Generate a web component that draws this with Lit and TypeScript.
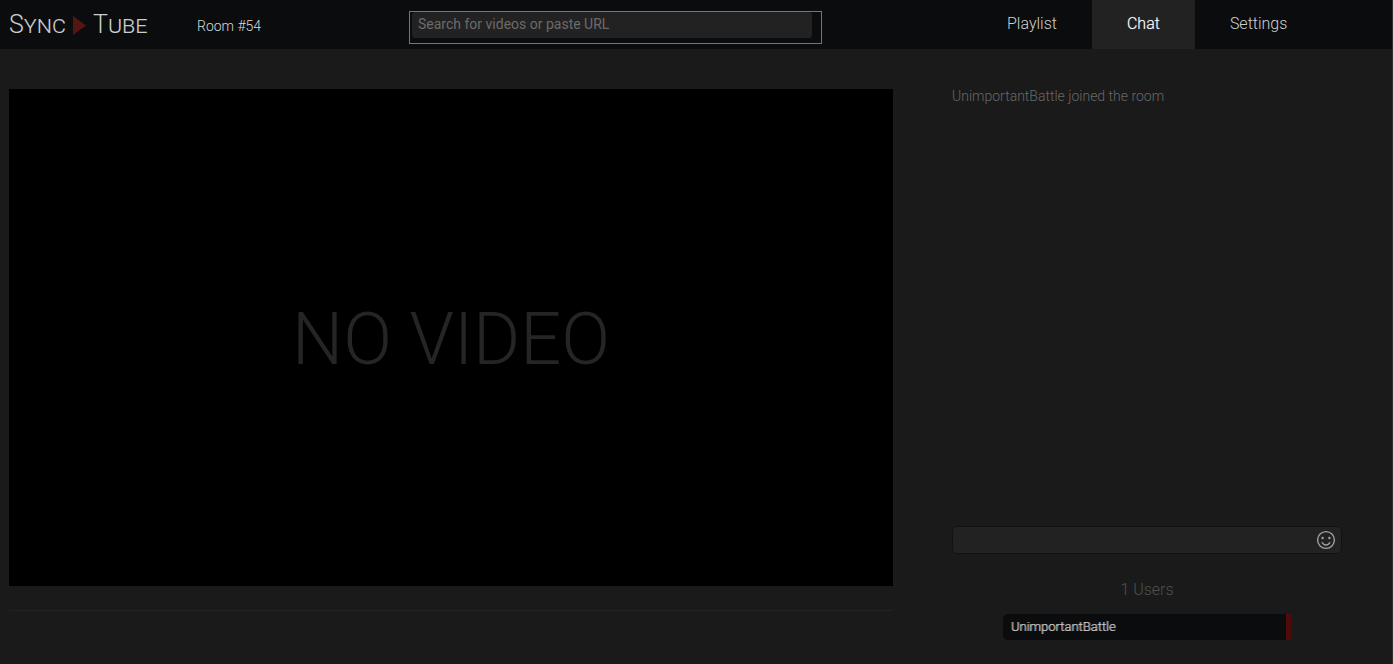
import { LitElement, html, css } from "lit";
import { customElement, state } from "lit/decorators.js";

const TABS = ["Playlist", "Chat", "Settings"];

@customElement("app-root")
export class AppRoot extends LitElement {
  @state() private tab = "Chat";

  static styles = css`
    :host {
      display: flex;
      flex-direction: column;
      box-sizing: border-box;
      min-height: 100vh;
      background: #1a1a1a;
      border-right: 1px solid #303030;
      color: #bbb;
      font-family: Roboto, "Liberation Sans", sans-serif;
      font-weight: 300;
      font-size: 14px;
    }
    * { box-sizing: border-box; }
    header {
      display: grid;
      grid-template-columns: 188fr 212fr 413fr 150fr 420fr;
      height: 49px;
      padding-left: 9px;
      background: #0b0c0e;
      line-height: 20px;
    }
    .logo {
      display: flex;
      align-items: center;
      gap: 7px;
      height: 50px;
      color: #ccc;
      font-size: 25px;
      font-variant: small-caps;
      text-decoration: none;
      line-height: 32px;
    }
    .logo svg { width: 13px; height: 19px; }
    .room { padding-top: 16px; color: #d8d8d8; font-size: 14px; }
    .search {
      height: 33px;
      margin-top: 11px;
      padding: 0 9px 0 2px;
      border: 1px solid #ff3b3b;
    }
    input {
      display: block;
      width: 100%;
      border: 0;
      outline: 0;
      border-radius: 3px;
      background: #222;
      color: #bbb;
      font: inherit;
    }
    .search input { height: 26px; padding: 0 6px 2px; font-weight: 400; }
    .search input::placeholder { color: #6b6b6b; opacity: 1; }
    nav { grid-column: 5; display: flex; }
    .tab {
      height: 49px;
      padding: 0 35px 2px;
      border: 0;
      background: none;
      color: #d0d0d0;
      font: inherit;
      font-size: 16px;
    }
    .tab.on { background: #222; color: #fff; text-shadow: 0 0 1px #ffffff80; }
    main {
      flex: 1;
      display: grid;
      grid-template-columns: 884fr 390fr;
      column-gap: 59px;
      padding: 40px 50px 24px 9px;
    }
    .video {
      display: flex;
      align-items: center;
      justify-content: center;
      padding-top: 4px;
      aspect-ratio: 16 / 9;
      background: #000;
      color: #252525;
      font-size: 72px;
      line-height: 84px;
    }
    hr { margin: 24px 0 0; border: 0; border-top: 1px solid #222; }
    .side { display: flex; flex-direction: column; }
    .log { flex: 1; line-height: 14px; color: #686868; }
    .compose { position: relative; }
    .compose input {
      height: 28px;
      padding: 0 32px 0 8px;
      border: 1px solid #111;
      border-radius: 5px;
    }
    .emoji {
      position: absolute;
      top: 4px;
      right: 6px;
      width: 20px;
      height: 20px;
      padding: 0;
      border: 0;
      background: none;
    }
    .emoji svg { display: block; }
    .count {
      margin: 26px 0 14px;
      text-align: center;
      font-size: 16px;
      font-weight: 300;
      line-height: 20px;
      color: #505050;
    }
    .users { width: 74%; margin: 0 auto; padding: 0; list-style: none; }
    .user {
      padding-left: 8px;
      border-right: 5px solid #500a0a;
      border-radius: 5px 0 0 5px;
      background: #0b0c0e;
      color: #d0d0d0;
      font-size: 13px;
      line-height: 26px;
      text-shadow: 1px 0 #d0d0d0a0;
    }
  `;

  render() {
    return html`
      <header>
        <a class="logo" href="#">
          <span>Sync</span>
          <svg viewBox="0 0 13 19" aria-hidden="true"><path d="M0 0L13 9.5L0 19Z" fill="#551515" /></svg>
          <span>Tube</span>
        </a>
        <div class="room">Room #54</div>
        <div class="search">
          <input type="text" aria-label="Search" placeholder="Search for videos or paste URL" />
        </div>
        <nav>
          ${TABS.map((t) => html`<button class="tab ${t === this.tab ? "on" : ""}" @click=${() => (this.tab = t)}>${t}</button>`)}
        </nav>
      </header>
      <main>
        <section>
          <div class="video">NO VIDEO</div>
          <hr />
        </section>
        <aside class="side">
          <div class="log">UnimportantBattle joined the room</div>
          <div class="compose">
            <input type="text" aria-label="Message" />
            <button class="emoji" aria-label="Emoji">
              <svg width="20" height="20" viewBox="0 0 20 20" fill="none" stroke="#a0a0a0" stroke-width="1.4">
                <circle cx="10" cy="10" r="8.4" />
                <circle cx="6.6" cy="8" r="1.2" fill="#a0a0a0" stroke="none" />
                <circle cx="13.4" cy="8" r="1.2" fill="#a0a0a0" stroke="none" />
                <path d="M6 12.3Q7.2 15 10 15T14 12.3" />
              </svg>
            </button>
          </div>
          <h2 class="count">1 Users</h2>
          <ul class="users"><li class="user">UnimportantBattle</li></ul>
        </aside>
      </main>
    `;
  }
}
